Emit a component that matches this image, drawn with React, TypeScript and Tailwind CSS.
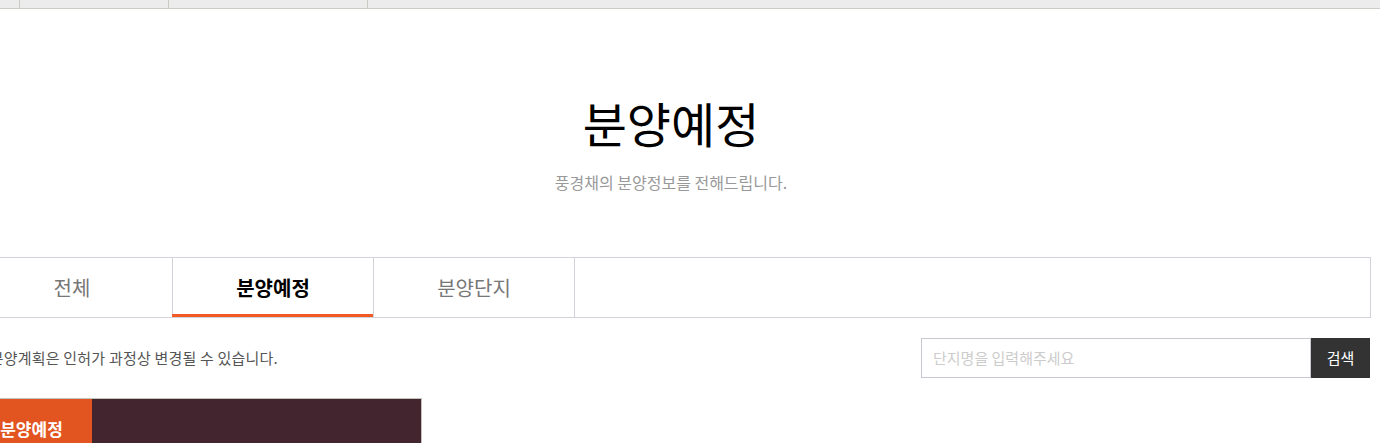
import React from "react";

export default function App() {
  const font = { fontFamily: '"Noto Sans CJK KR", "Noto Sans", sans-serif' };
  return (
    <div className="w-[1380px] h-[443px] overflow-hidden bg-white" style={font}>
      {/* top strip */}
      <div className="flex h-[9px] bg-[#ececec] border-b border-[#cbcbc6]">
        <div className="w-[20px] border-r border-[#cbcbc6]" />
        <div className="w-[149px] border-r border-[#cbcbc6]" />
        <div className="w-[199px] border-r border-[#cbcbc6]" />
        <div className="flex-1" />
      </div>

      <div className="ml-[-29px] w-[1400px]">
        {/* heading */}
        <div className="flex flex-col items-center pt-[83px]">
          <h1 className="text-[48px] leading-[60px] text-black font-normal">분양예정</h1>
          <p className="mt-[20px] text-[16px] leading-[20px] text-[#999999]">풍경채의 분양정보를 전해드립니다.</p>
        </div>

        {/* tabs */}
        <div className="mt-[65px] flex h-[61px] border-t border-b border-[#d2d2da]">
          <div className="w-[201px] border-l border-[#d2d2da] flex items-center justify-center text-[20px] text-[#777777]">전체</div>
          <div className="relative w-[201px] border-l border-[#d2d2da] flex items-center justify-center text-[20px] font-bold text-black">
            분양예정
            <span className="absolute left-[-1px] right-0 bottom-0 h-[3px] bg-[#f15a24]" />
          </div>
          <div className="w-[201px] border-l border-[#d2d2da] flex items-center justify-center text-[20px] text-[#777777]">분양단지</div>
          <div className="flex-1 border-l border-r border-[#d2d2da]" />
        </div>

        {/* notice + search */}
        <div className="mt-[20px] flex items-center justify-between">
          <p className="text-[15px] text-[#555555] tracking-[0.2px]">※ 분양계획은 인허가 과정상 변경될 수 있습니다.</p>
          <div className="flex h-[40px] mr-[1px]">
            <div className="w-[390px] border border-[#c8c8d2] flex items-center pl-[11px] text-[15px] text-[#cccccc]">단지명을 입력해주세요</div>
            <div className="w-[59px] bg-[#333333] flex items-center justify-center text-[15px] text-white">검색</div>
          </div>
        </div>

        {/* schedule box */}
        <div className="mt-[20px] w-[451px] h-[60px] border-t border-r border-[#c4c4be] flex">
          <div className="w-[121px] bg-[#e25520] flex items-center justify-center text-[17px] font-bold text-white">분양예정</div>
          <div className="flex-1 bg-[#432530]" />
        </div>
      </div>
    </div>
  );
}
